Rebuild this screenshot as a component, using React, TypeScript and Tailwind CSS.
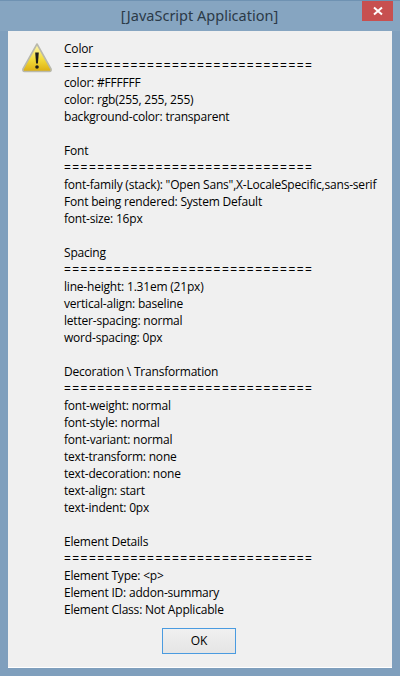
const sections = [
    { title: "Color", lines: ["color: #FFFFFF", "color: rgb(255, 255, 255)", "background-color: transparent"] },
    { title: "Font", lines: ['font-family (stack): "Open Sans",X-LocaleSpecific,sans-serif', "Font being rendered: System Default", "font-size: 16px"] },
    { title: "Spacing", lines: ["line-height: 1.31em (21px)", "vertical-align: baseline", "letter-spacing: normal", "word-spacing: 0px"] },
    { title: "Decoration \\ Transformation", lines: ["font-weight: normal", "font-style: normal", "font-variant: normal", "text-transform: none", "text-decoration: none", "text-align: start", "text-indent: 0px"] },
    { title: "Element Details", lines: ["Element Type: <p>", "Element ID: addon-summary", "Element Class: Not Applicable"] },
];

const WarningIcon = () => (
    <svg width="32" height="32" viewBox="0 0 32 32" className="shrink-0 mt-[2px]">
        <defs>
            <linearGradient id="warn" x1="0" y1="0" x2="0" y2="1">
                <stop offset="0" stopColor="#fff8b8" />
                <stop offset="0.55" stopColor="#f3dc3c" />
                <stop offset="1" stopColor="#dcae12" />
            </linearGradient>
        </defs>
        <path d="M15 2 L29 27 Q29.5 29.5 27.5 29.5 L2.5 29.5 Q0.5 29.5 1 27 Z" fill="url(#warn)" stroke="#b9b9ac" strokeWidth="1.6" strokeLinejoin="round" />
        <path d="M13.2 10.5 L16.8 10.5 L15.9 21.5 L14.1 21.5 Z" fill="#1c1c1c" />
        <circle cx="15" cy="25" r="1.8" fill="#1c1c1c" />
    </svg>
);

export default function App() {
    return (
        <div className="w-[400px] h-[676px] flex flex-col bg-[#7f9fbd] font-['Open_Sans',sans-serif] text-black overflow-hidden">
            <div className="h-[31px] shrink-0 flex items-start bg-[#86a5c1] border-t border-[#6f92b2]">
                <div className="flex-1 pl-[37px] pt-[3px] text-center text-[14.5px] leading-[22px] text-[#2b3a48] font-['Noto_Sans',sans-serif]">
                    [JavaScript Application]
                </div>
                <div className="w-[31px] h-[20px] mr-[7px] flex items-center justify-center bg-[#c75050]">
                    <svg width="10" height="10" viewBox="0 0 10 10">
                        <path d="M1 1.5 L9 8.5 M9 1.5 L1 8.5" stroke="#fff" strokeWidth="2" />
                    </svg>
                </div>
            </div>
            <div className="mx-[8px] h-[637px] shrink-0 flex flex-col bg-[#f0f0f0] border-b border-white">
                <div className="flex-1 flex pl-[14px] pt-[9px] gap-[10px]">
                    <WarningIcon />
                    <div className="text-[12px] leading-[17px] tracking-[-0.2px] whitespace-nowrap flex flex-col gap-[17px]">
                        {sections.map((section) => (
                            <div key={section.title}>
                                <p>{section.title}</p>
                                <p className="tracking-[1.45px]">==============================</p>
                                {section.lines.map((line) => (
                                    <p key={line}>{line}</p>
                                ))}
                            </div>
                        ))}
                    </div>
                </div>
                <div className="flex justify-center pb-[13px] pr-[2px]">
                    <button className="w-[74px] h-[26px] text-[12px] bg-gradient-to-b from-[#f0f0f0] to-[#e5e5e5] border border-[#4a9be0]">
                        OK
                    </button>
                </div>
            </div>
        </div>
    );
}
